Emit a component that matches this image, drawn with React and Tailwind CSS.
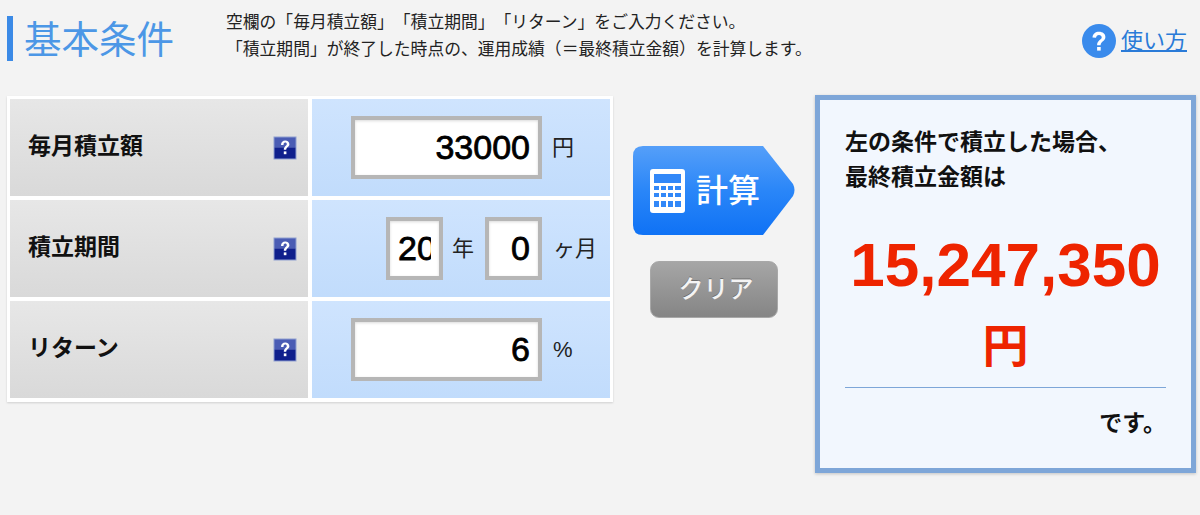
import React from 'react';

const FONT = "font-['Liberation_Sans','Noto_Sans_CJK_JP',sans-serif]";

// small square "?" badge next to each row label
const HelpBadge = () => (
  <svg width="24" height="24" viewBox="0 0 24 24" className="shrink-0">
    <rect x="0.5" y="0.5" width="23" height="23" fill="#8f9fd0" />
    <rect x="1.5" y="1.5" width="21" height="10" fill="#4a5cb4" />
    <rect x="1.5" y="11.5" width="21" height="11" fill="#0f1f8c" />
    <path d="M8 9c0-3 1.8-4.5 4.2-4.5S16.4 6 16.4 8.2c0 2.6-3.2 3-3.2 5.6h-2.4c0-3.4 3-3.8 3-5.5 0-1-.6-1.7-1.6-1.7s-1.6.7-1.7 2.4z" fill="#fff" />
    <rect x="10.8" y="15.4" width="2.6" height="2.8" fill="#fff" />
  </svg>
);

const Box = ({ value, className }) => (
  <input
    readOnly
    value={value}
    className={`h-[63px] border-4 border-[#b6b6b6] bg-white pr-2 pl-2 text-right text-[34px] text-black outline-none shadow-[inset_0_1px_3px_rgba(0,0,0,0.15)] [-webkit-text-stroke:0.8px_black] ${FONT} ${className}`}
  />
);

const Row = ({ label, children }) => (
  <div className="flex h-[97px] gap-[4px]">
    <div className="flex w-[298px] items-center justify-between bg-gradient-to-b from-[#e7e7e7] to-[#d9d9d9] pr-[11px] pl-[18px]">
      <span className="-mt-[2px] text-[23px] font-bold text-[#111]">{label}</span>
      <HelpBadge />
    </div>
    <div className="flex w-[298px] items-center bg-gradient-to-b from-[#cfe4fe] to-[#c1dcfc] pl-[39px]">
      {children}
    </div>
  </div>
);

const Unit = ({ children, className }) => (
  <span className={`text-[22px] text-[#222] ${className}`}>{children}</span>
);

const App = () => {
  return (
    <div className={`h-[515px] w-[1200px] overflow-hidden bg-[#f3f3f3] ${FONT}`}>
      {/* Header */}
      <div className="flex h-[95px] items-start">
        <div className="mt-[16px] ml-[7px] h-[45px] w-[6px] bg-[#3b8ae6]" />
        <h1 className="mt-[15px] ml-[11px] w-[202px] text-[37.5px] leading-[50px] font-normal text-[#4c97e6]">基本条件</h1>
        <div className="mt-[9px] text-[16.8px] leading-[27px] text-[#222] [text-spacing-trim:space-all] [font-feature-settings:'fwid']">
          <p>空欄の「毎月積立額」「積立期間」「リターン」をご入力ください。</p>
          <p>「積立期間」が終了した時点の、運用成績（＝最終積立金額）を計算します。</p>
        </div>
        <div className="mt-[24px] ml-auto flex items-center gap-[5px] pr-[13px]">
          <svg width="34" height="34" viewBox="0 0 34 34">
            <circle cx="17" cy="17" r="17" fill="#3a8bec" />
            <path d="M10.5 13.5C10.8 9.6 13.5 7.8 17 7.8c3.8 0 6.4 2.1 6.4 5.3 0 4.3-4.8 4.4-4.8 8.2h-3.5c0-5 4.6-5.4 4.6-8 0-1.4-1.1-2.4-2.7-2.4-1.7 0-2.8 1-3 2.9z" fill="#fff" />
            <rect x="15.1" y="23" width="3.6" height="3.6" fill="#fff" />
          </svg>
          <a className="text-[22px] leading-[28px] text-[#2a7bd8] underline">使い方</a>
        </div>
      </div>

      {/* Main */}
      <div className="flex items-start pl-[7px]">
        <div className="mt-px flex w-[606px] flex-col gap-[4px] border-3 border-b-4 border-white bg-white shadow-[0_1px_2px_rgba(0,0,0,0.15)]">
          <Row label="毎月積立額">
            <Box value="33000" className="w-[191px]" />
            <Unit className="ml-[10px]">円</Unit>
          </Row>
          <Row label="積立期間">
            <Box value="20" className="ml-[35px] w-[57px]" />
            <Unit className="ml-[9px]">年</Unit>
            <Box value="0" className="ml-[11px] w-[57px]" />
            <Unit className="ml-[11px] whitespace-nowrap">ヶ月</Unit>
          </Row>
          <Row label="リターン">
            <Box value="6" className="w-[191px]" />
            <Unit className="ml-[11px]">%</Unit>
          </Row>
        </div>

        {/* Buttons */}
        <div className="ml-[20px] flex w-[162px] flex-col items-center pt-[51px]">
          <div className="relative flex h-[89px] w-[162px] items-center pl-[17px]">
            <svg width="162" height="89" viewBox="0 0 162 89" className="absolute inset-0">
              <defs>
                <linearGradient id="calcBtn" x1="0" y1="0" x2="0" y2="1">
                  <stop offset="0" stopColor="#559ff9" />
                  <stop offset="0.5" stopColor="#2a86f8" />
                  <stop offset="1" stopColor="#0f72f5" />
                </linearGradient>
              </defs>
              <path d="M10 0H130L160 38Q163 44 160 50L130 89H10Q0 89 0 79V10Q0 0 10 0Z" fill="url(#calcBtn)" />
            </svg>
            <svg width="35" height="44" viewBox="0 0 35 44" className="relative">
              <rect width="35" height="44" rx="3" fill="#fff" />
              <rect x="4" y="5" width="27" height="9" fill="#3288f8" />
              <g fill="#3288f8">
                <rect x="4" y="17" width="5" height="4" /><rect x="11" y="17" width="5" height="4" /><rect x="18" y="17" width="5" height="4" /><rect x="25" y="17" width="6" height="4" />
                <rect x="4" y="24" width="5" height="4" /><rect x="11" y="24" width="5" height="4" /><rect x="18" y="24" width="5" height="4" /><rect x="25" y="24" width="6" height="4" />
                <rect x="4" y="32" width="5" height="6" /><rect x="11" y="32" width="5" height="6" /><rect x="18" y="32" width="5" height="6" /><rect x="25" y="32" width="6" height="6" />
              </g>
            </svg>
            <span className="relative ml-[11px] text-[32px] font-medium text-white">計算</span>
          </div>
          <div className="mt-[26px] flex h-[57px] w-[128px] items-center justify-center rounded-[9px] border border-[#a8a8a8] bg-gradient-to-b from-[#a6a6a6] to-[#858585] pl-[4px] text-[25px] font-medium text-[#f4f4f4] [text-shadow:0_-1px_0_rgba(0,0,0,0.3)]">
            クリア
          </div>
        </div>

        {/* Result */}
        <div className="ml-[20px] h-[378px] w-[381px] border-[5px] border-[#7ea6d8] bg-[#f2f7fe] px-[25px] pt-[25px] shadow-[0_1px_3px_rgba(0,0,0,0.2)]">
          <p className="text-[23px] leading-[35px] font-bold text-[#111]">
            左の条件で積立した場合、<br />最終積立金額は
          </p>
          <div className="mt-[29px] pb-[3px] text-center font-bold text-[#ee2400]">
            <p className="text-[62px] leading-[82px]">15,247,350</p>
            <p className="pt-[2px] text-[46px] leading-[76px]">円</p>
          </div>
          <div className="border-t border-[#7ea6d8] pt-[20px] text-right text-[23px] leading-[30px] font-bold text-[#111]">
            です。
          </div>
        </div>
      </div>
    </div>
  );
};

export default App;
